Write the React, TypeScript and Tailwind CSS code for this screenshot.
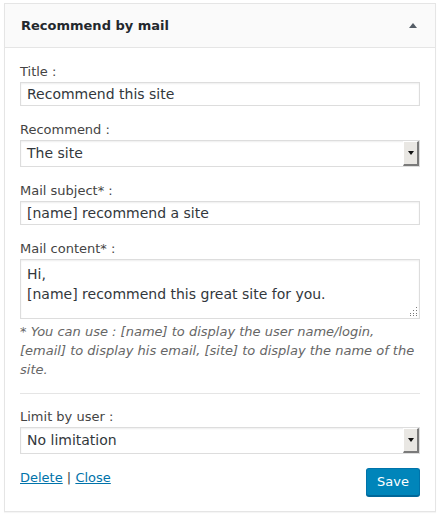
export default function App() {
  const inputCls =
    'block w-full h-[24px] border border-[#dddddd] bg-white px-[6px] text-[14px] leading-[22px] text-[#32373c] shadow-[inset_0_1px_2px_rgba(0,0,0,0.07)]'

  const SelectBox = ({ value }: { value: string }) => (
    <div className="flex h-[27px] w-full border border-[#dddddd] bg-white shadow-[inset_0_1px_2px_rgba(0,0,0,0.07)]">
      <span className="flex-1 px-[6px] text-[14px] leading-[25px] text-[#32373c]">{value}</span>
      <span className="flex w-[16px] items-center justify-center border-t border-l border-t-white border-l-white border-r-2 border-b-2 border-r-[#7a7a7a] border-b-[#7a7a7a] bg-[#e9e7e3]">
        <svg width="6" height="4" viewBox="0 0 6 4">
          <path d="M0 0h6L3 4z" fill="#111" />
        </svg>
      </span>
    </div>
  )

  return (
    <div className="min-h-screen bg-white pt-[3px] pl-[4px]" style={{ fontFamily: '"DejaVu Sans", sans-serif' }}>
      <div className="w-[432px] border border-[#e5e5e5] bg-white shadow-[0_1px_1px_rgba(0,0,0,0.04)]">
        <div className="flex h-[44px] items-center justify-between border-b border-[#e5e5e5] bg-[#fafafa] pl-[16px] pr-[18px]">
          <h3 className="text-[13px] font-bold text-[#23282d]">Recommend by mail</h3>
          <svg width="8" height="5" viewBox="0 0 8 5">
            <path d="M4 0L8 5H0z" fill="#555d66" />
          </svg>
        </div>

        <div className="px-[15px] pt-[15px] pb-[15px] text-[13px] text-[#444]">
          <div className="mb-[15px]">
            <label className="mb-[1px] block leading-[18px]">Title :</label>
            <input className={inputCls} defaultValue="Recommend this site" />
          </div>

          <div className="mb-[15px]">
            <label className="mb-[1px] block leading-[18px]">Recommend :</label>
            <SelectBox value="The site" />
          </div>

          <div className="mb-[15px]">
            <label className="mb-[1px] block leading-[18px]">Mail subject* :</label>
            <input className={inputCls} defaultValue="[name] recommend a site" />
          </div>

          <div>
            <label className="mb-[1px] block leading-[18px]">Mail content* :</label>
            <div className="relative h-[60px] border border-[#dddddd] bg-white px-[6px] pt-[4px] text-[14px] leading-[20px] text-[#32373c] shadow-[inset_0_1px_2px_rgba(0,0,0,0.07)]">
              <div>Hi,</div>
              <div>[name] recommend this great site for you.</div>
              <svg className="absolute right-[1px] bottom-[1px]" width="10" height="10" viewBox="0 0 10 10" fill="#777">
                <rect x="8" y="0" width="1" height="1" />
                <rect x="8" y="3" width="1" height="1" />
                <rect x="5" y="3" width="1" height="1" />
                <rect x="8" y="6" width="1" height="1" />
                <rect x="5" y="6" width="1" height="1" />
                <rect x="2" y="6" width="1" height="1" />
                <rect x="8" y="8" width="1" height="1" />
                <rect x="5" y="8" width="1" height="1" />
                <rect x="2" y="8" width="1" height="1" />
              </svg>
            </div>
            <p className="mt-[3px] text-[13px] italic leading-[19px] text-[#666]">
              * You can use : [name] to display the user name/login, [email] to display his email, [site] to display the name of the site.
            </p>
          </div>

          <hr className="my-[14px] border-t border-[#e5e5e5]" />

          <div className="mb-[14px]">
            <label className="mb-[1px] block leading-[18px]">Limit by user :</label>
            <SelectBox value="No limitation" />
          </div>

          <div className="flex items-start justify-between">
            <div className="pt-[1px] leading-[18px]">
              <a href="#" className="text-[#0073aa] underline">Delete</a>
              <span className="text-[#444]"> | </span>
              <a href="#" className="text-[#0073aa] underline">Close</a>
            </div>
            <button className="h-[28px] rounded-[3px] border border-[#0073aa] border-b-[#006799] bg-[#0085ba] px-[10px] text-[13px] leading-[26px] text-white shadow-[0_1px_0_#006799]">
              Save
            </button>
          </div>
        </div>
      </div>
    </div>
  )
}
